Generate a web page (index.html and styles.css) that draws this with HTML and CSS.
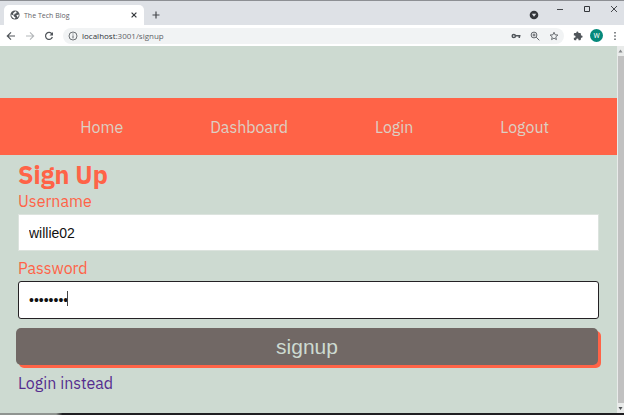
FILE: index.html
```html
<!DOCTYPE html>
<html lang="en">
<head>
<meta charset="utf-8">
<title>The Tech Blog</title>
<link rel="stylesheet" href="styles.css">
</head>
<body>
<header class="browser">
  <div class="tabs">
    <div class="tab">
      <svg class="icon-small" viewBox="0 0 24 24" aria-hidden="true"><circle cx="12" cy="12" r="11" fill="#50555a"/><path d="M3 11l6 2 1 3 3 1-1 4C7 20 3 17 3 11zM13 3l3 2-1 3-4 1-1 3-3-2 1-3zM17 12l4-1c0 3-1 6-3 7l-1-3-2-2z" fill="#fff"/></svg>
      <span class="tab-title">The Tech Blog</span>
      <button class="tool" aria-label="Close tab"><svg class="icon-tiny" viewBox="0 0 10 10"><path d="M2 2l6 6M8 2l-6 6" stroke="#34373b" stroke-width="1.500"/></svg></button>
    </div>
    <button class="tool new-tab" aria-label="New tab"><svg class="icon-tiny" viewBox="0 0 8 8"><path d="M4 .5v7M.5 4h7" stroke="#45484c" stroke-width="1.200"/></svg></button>
    <div class="window-controls">
      <button class="tool search-tabs" aria-label="Search tabs"><svg class="icon-small" viewBox="0 0 10 10"><circle cx="5" cy="5" r="4.300" fill="#34373b"/><path d="M2.800 3.800h4.400L5 6.800z" fill="#dee1e6"/></svg></button>
      <button class="tool" aria-label="Minimize"><svg class="icon-tiny" viewBox="0 0 8 8"><path d="M1 4.500h6" stroke="#45484c"/></svg></button>
      <button class="tool" aria-label="Maximize"><svg class="icon-tiny" viewBox="0 0 8 8"><path d="M1.500 1.500h5v5h-5z" fill="none" stroke="#34373b"/></svg></button>
      <button class="tool" aria-label="Close"><svg class="icon-tiny" viewBox="0 0 8 8"><path d="M1 1l6 6M7 1L1 7" stroke="#34373b" stroke-width=".9"/></svg></button>
    </div>
  </div>
  <div class="toolbar">
    <button class="tool" aria-label="Back"><svg class="icon-small" viewBox="0 0 10 10"><path d="M9 5H1.500M5 1.300L1.300 5 5 8.700" fill="none" stroke="#50555a" stroke-width="1.200"/></svg></button>
    <button class="tool" aria-label="Forward"><svg class="icon-small" viewBox="0 0 10 10"><path d="M1 5h7.500M5 1.300L8.700 5 5 8.700" fill="none" stroke="#b4b7ba" stroke-width="1.100"/></svg></button>
    <button class="tool" aria-label="Reload"><svg class="icon-small" viewBox="0 0 10 10"><path d="M8 3A3.500 3.500 0 1 0 8.400 6" fill="none" stroke="#50555a" stroke-width="1.200"/><path d="M9 1v3.500H5.500z" fill="#50555a"/></svg></button>
    <div class="address">
      <svg class="icon-small" viewBox="0 0 10 10" aria-hidden="true"><circle cx="5" cy="5" r="4" fill="none" stroke="#5f6368" stroke-width=".9"/><path d="M5 4.400v3M5 2.500v1" stroke="#5f6368"/></svg>
      <span class="url"><span class="host">localhost</span>:3001/signup</span>
      <button class="tool" aria-label="Passwords"><svg class="icon-small" viewBox="0 0 10 10"><circle cx="2.800" cy="5" r="1.600" fill="none" stroke="#50555a" stroke-width="1.500"/><path d="M4.500 4.800h5M8.300 5v2" stroke="#50555a" stroke-width="1.500"/></svg></button>
      <button class="tool" aria-label="Zoom"><svg class="icon-small" viewBox="0 0 10 10"><circle cx="4" cy="4" r="2.900" fill="none" stroke="#50555a" stroke-width=".9"/><path d="M6.200 6.200L9.300 9.300M2.500 4h3M4 2.500v3" stroke="#50555a" stroke-width=".9"/></svg></button>
      <button class="tool" aria-label="Bookmark"><svg class="icon-small" viewBox="0 0 24 24"><path d="M12 3l2.700 6.100 6.600.6-5 4.400 1.500 6.500L12 17.200l-5.800 3.400 1.500-6.500-5-4.400 6.600-.6z" fill="none" stroke="#50555a" stroke-width="2"/></svg></button>
    </div>
    <div class="extensions">
      <button class="tool" aria-label="Extensions"><svg class="icon-small" viewBox="0 0 24 24"><path d="M20.500 11H19V7a2 2 0 0 0-2-2h-4V3.500a2.500 2.500 0 0 0-5 0V5H4a2 2 0 0 0-2 2v3.800h1.500a2.700 2.700 0 0 1 0 5.400H2V20c0 1.100.9 2 2 2h3.800v-1.500a2.700 2.700 0 0 1 5.400 0V22H17a2 2 0 0 0 2-2v-4h1.500a2.500 2.500 0 0 0 0-5z" fill="#50555a"/></svg></button>
      <button class="tool avatar" aria-label="Profile">W</button>
      <button class="tool" aria-label="Menu"><svg class="icon-small" viewBox="0 0 10 10"><path d="M4.300 1h1.400v1.400H4.300zM4.300 4.300h1.400v1.400H4.300zM4.300 7.600h1.400V9H4.300z" fill="#50555a"/></svg></button>
    </div>
  </div>
</header>
<div class="viewport">
  <div class="page">
    <nav class="nav">
      <a href="#home">Home</a>
      <a href="#dashboard">Dashboard</a>
      <a href="#login">Login</a>
      <a href="#logout">Logout</a>
    </nav>
    <main class="content">
      <h1>Sign Up</h1>
      <form class="form">
        <label for="username">Username</label>
        <input class="field" id="username" type="text" value="willie02">
        <label for="password">Password</label>
        <div class="active-field">
          <input class="field" id="password" type="password" value="password">
          <span class="caret"></span>
        </div>
        <button class="submit" type="button">signup</button>
      </form>
      <a class="login-link" href="#login">Login instead</a>
    </main>
  </div>
  <div class="scrollbar" aria-hidden="true">
    <svg class="arrow" viewBox="0 0 7 10"><path d="M1.500 6.500h4l-2-3z" fill="#85888a"/></svg>
    <div class="thumb"></div>
    <svg class="arrow" viewBox="0 0 7 10"><path d="M1.500 4h4l-2 3z" fill="#505356"/></svg>
  </div>
</div>
<div class="desktop-edge"></div>
</body>
</html>
```
FILE: styles.css
```css
* {
  box-sizing: border-box;
}

body {
  margin: 0;
  min-height: 100vh;
  display: flex;
  flex-direction: column;
  background: #cddad1;
  font-family: "IBM Plex Sans", Roboto, "Noto Sans", sans-serif;
}

.browser {
  font-family: "Open Sans", sans-serif;
  font-size: 8px;
  color: #5f6368;
}

.tabs {
  display: flex;
  align-items: flex-end;
  height: 25px;
  padding-left: 4px;
  background: #dee1e6;
  border-top: 1px solid #8d8f94;
}

.tab {
  display: flex;
  align-items: center;
  gap: 4px;
  width: 140px;
  height: 20px;
  padding: 0 6px;
  background: #fff;
  border-radius: 5px 5px 0 0;
  font-size: 7px;
}

.tab-title {
  flex: 1;
}

.tool {
  display: flex;
  align-items: center;
  justify-content: center;
  padding: 0;
  border: 0;
  background: none;
}

.icon-small {
  display: block;
  width: 10px;
  height: 10px;
}

.icon-tiny {
  display: block;
  width: 8px;
  height: 8px;
}

.new-tab {
  height: 20px;
  margin-left: 8px;
}

.window-controls {
  display: flex;
  align-items: center;
  align-self: flex-start;
  gap: 19px;
  height: 16px;
  margin-left: auto;
  padding-right: 6px;
}

.search-tabs {
  align-self: flex-end;
  height: 4px;
  margin-right: -2px;
}

.toolbar {
  display: flex;
  align-items: center;
  gap: 9px;
  height: 21px;
  padding: 0 4px 0 6px;
  background: #fff;
}

.address {
  display: flex;
  flex: 1;
  align-items: center;
  gap: 9px;
  height: 16px;
  padding: 0 5px;
  border-radius: 8px;
  background: #f1f3f4;
}

.url {
  flex: 1;
  margin-left: -5px;
}

.host {
  color: #303338;
}

.extensions {
  display: flex;
  align-items: center;
  gap: 7px;
}

.avatar {
  width: 13px;
  height: 13px;
  border-radius: 50%;
  background: #05897b;
  color: #fff;
  font-family: Roboto, sans-serif;
  font-size: 7px;
}

.viewport {
  display: flex;
  flex: 1;
}

.page {
  flex: 1;
  padding-top: 52px;
}

.nav {
  display: flex;
  align-items: center;
  justify-content: space-between;
  height: 57px;
  padding: 0 11% 0 13%;
  background: #ff6347;
  font-size: 16px;
}

.nav a {
  color: #dccfc3;
  text-decoration: none;
}

.content {
  padding: 4px 18px 0;
  color: #ff6347;
  font-size: 16px;
  line-height: 21px;
}

h1 {
  margin: 0;
  font-size: 25px;
  line-height: 32px;
}

.form {
  display: flex;
  flex-direction: column;
}

.field {
  width: 100%;
  height: 37px;
  margin: 2px 0 7px;
  padding: 0 10px;
  border: 1px solid #dce3de;
  background: #fff;
  color: #111;
  font-family: "Liberation Sans", sans-serif;
  font-size: 14px;
}

.active-field {
  position: relative;
}

.active-field .field {
  display: block;
  height: 38px;
  border: 1px solid #242124;
  border-radius: 3px;
}

.caret {
  position: absolute;
  top: 12px;
  left: 49px;
  width: 1px;
  height: 15px;
  background: #444;
}

.submit {
  height: 37px;
  margin: 2px 1px 0 -2px;
  padding: 0;
  border: 0;
  border-radius: 5px;
  background: #716865;
  box-shadow: 3px 3px 0 #ff6347;
  color: #cddad1;
  font-family: "Liberation Sans", sans-serif;
  font-size: 21px;
}

.login-link {
  display: inline-block;
  margin-top: 8px;
  color: #552c8f;
  text-decoration: none;
}

.scrollbar {
  display: flex;
  flex-direction: column;
  width: 7px;
  background: #e9ebea;
}

.thumb {
  flex: 1;
  margin-left: 1px;
  background: #c1c1c1;
}

.arrow {
  width: 7px;
  height: 10px;
}

.desktop-edge {
  height: 2px;
  background: linear-gradient(to right, #8f9490 9%, #1f1e21 10%);
}
```
